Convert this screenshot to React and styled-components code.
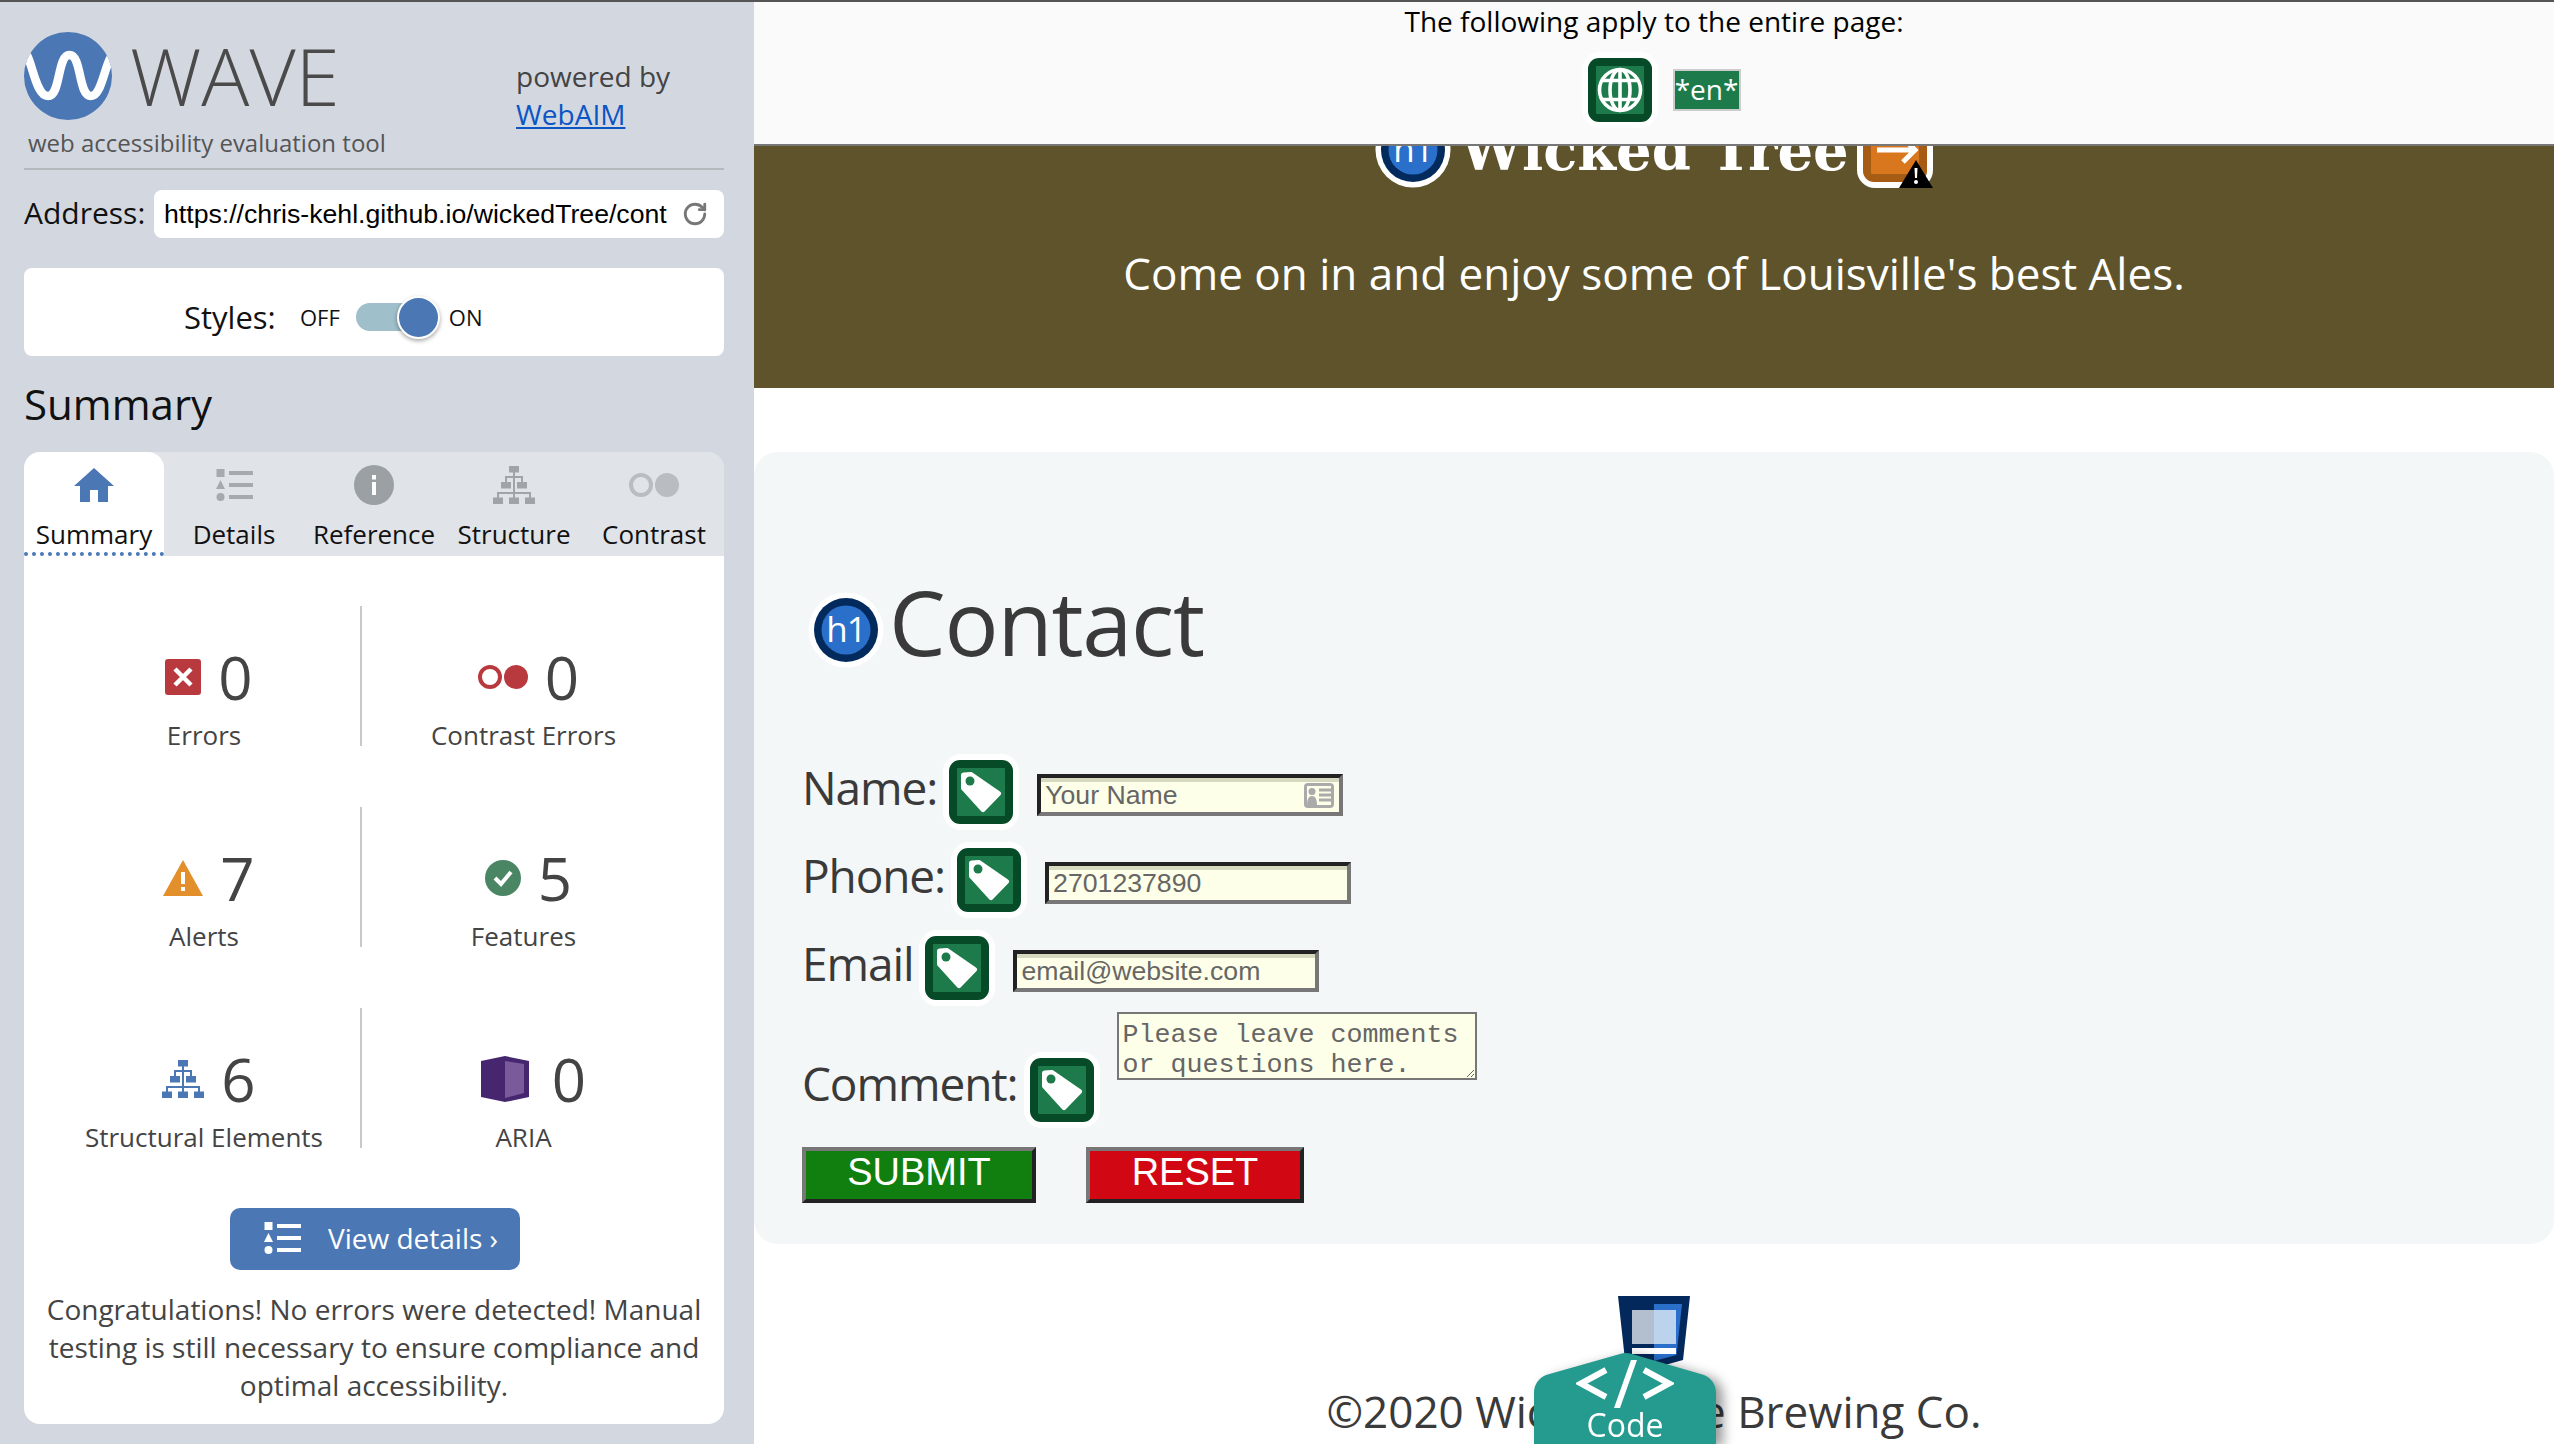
import React from 'react';
import styled, { createGlobalStyle } from 'styled-components';
import { RotateCw } from 'lucide-react';

const Global = createGlobalStyle`
  html, body { margin: 0; padding: 0; height: 1444px; overflow: hidden; background: #fff; }
  body { font-family: "Open Sans", "Liberation Sans", sans-serif; }
  * { box-sizing: border-box; }
`;

const Page = styled.div`
  width: 2554px; height: 1444px; display: flex; overflow: hidden;
  border-top: 2px solid #555; position: relative;
`;

/* ---------- sidebar ---------- */
const Sidebar = styled.aside`
  width: 754px; flex: none; background: #d3d8e0; padding: 30px 30px 0 24px; height: 1442px;
`;
const Brand = styled.header`
  display: flex; height: 138px; border-bottom: 2px solid #b4b9bd;
`;
const BrandLeft = styled.div` width: 492px; flex: none; `;
const LogoRow = styled.div` display: flex; align-items: center; gap: 18px; height: 88px; `;
const LogoWord = styled.div`
  font-size: 80px; font-weight: 300; color: #4a4a4a; line-height: 88px; margin-top: -2px;
`;
const Tagline = styled.div`
  font-size: 24px; color: #555; line-height: 30px; margin: 8px 0 0 4px;
`;
const Powered = styled.div`
  font-size: 28px; line-height: 38px; color: #444; padding-top: 25px;
  a { color: #0b55c5; display: block; }
`;
const AddressRow = styled.div` display: flex; align-items: center; margin-top: 20px; gap: 9px; `;
const AddressLabel = styled.label` font-size: 30px; color: #111; width: 121px; white-space: nowrap; margin-top: -4px; `;
const AddressBox = styled.div`
  flex: 1; height: 48px; background: #fff; border-radius: 8px; display: flex; align-items: center;
  padding: 0 10px 0 10px; color: #777; gap: 15px;
`;
const AddressText = styled.div`
  width: 503px; overflow: hidden; white-space: nowrap; font: 26.67px "Liberation Sans", sans-serif; color: #000;
`;
const StylesCard = styled.div`
  margin-top: 30px; height: 88px; background: #fff; border-radius: 8px; display: flex; align-items: center;
  padding: 10px 0 0 160px;
`;
const StylesLabel = styled.span` font-size: 31px; color: #111; width: 116px; `;
const ToggleText = styled.span` font-size: 22px; color: #111; `;
const Track = styled.div`
  width: 64px; height: 28px; background: #9fbfca; border-radius: 14px; margin: 0 29px 0 16px; position: relative; flex: none;
`;
const Knob = styled.div`
  position: absolute; left: 41px; top: -7px; width: 43px; height: 43px; border-radius: 50%; background: #4b78b5;
  border: 2px solid #fff; box-shadow: 0 2px 4px rgba(0,0,0,.35);
`;
const SummaryTitle = styled.h2`
  font-size: 42px; font-weight: 400; color: #111; margin: 21px 0 0; line-height: 54px; padding-bottom: 2px;
`;
const TabsPanel = styled.section` margin-top: 19px; `;
const TabBar = styled.div`
  display: flex; height: 104px; background: #e0e3e8; border-radius: 16px 16px 0 0;
`;
const Tab = styled.div`
  width: 140px; display: flex; flex-direction: column; align-items: center; position: relative;
  background: ${p => (p.$active ? '#fff' : 'transparent')};
  border-radius: ${p => (p.$active ? '16px 16px 0 0' : '0')};
  border-bottom: ${p => (p.$active ? '4px dotted #4b78b5' : '4px solid transparent')};
`;
const TabIcon = styled.div` height: 65px; display: flex; align-items: center; justify-content: center; `;
const TabLabel = styled.div` font-size: 26px; line-height: 34px; color: #111; white-space: nowrap; `;
const Body = styled.div`
  background: #fff; height: 868px; border-radius: 0 0 16px 16px; padding-top: 50px;
`;
const StatGrid = styled.div`
  display: grid; grid-template-columns: 314px 323px; padding-left: 24px; row-gap: 61px;
`;
const Stat = styled.div`
  height: 140px; padding-top: 37px; text-align: center;
  border-right: ${p => (p.$left ? '2px solid #c9c9c9' : 'none')};
`;
const StatValue = styled.div`
  display: flex; justify-content: center; align-items: center; gap: 17px; height: 68px; padding-left: ${p => p.$pl || 10}px;
`;
const StatNumber = styled.span`
  font-size: 60px; font-weight: 400; color: #444; line-height: 68px; margin-left: ${p => p.$ml || 0}px;
`;
const StatLabel = styled.div` font-size: 26px; color: #444; line-height: 36px; margin-top: 6px; white-space: nowrap; `;
const DetailsBtn = styled.div`
  width: 290px; height: 62px; margin: 60px auto 0 206px; background: #4b78b5; border-radius: 10px; color: #fff;
  display: flex; align-items: center; padding: 0 0 2px 34px; gap: 27px; font-size: 28px;
`;
const Congrats = styled.p`
  margin: 20px 0 0; text-align: center; color: #444; font-size: 28px; line-height: 38px; padding: 0 10px;
`;

/* ---------- main ---------- */
const Main = styled.main` flex: 1; display: flex; flex-direction: column; min-width: 0; overflow: hidden; `;
const PageBar = styled.div`
  height: 144px; background: #fafafa; border-bottom: 2px solid #777; flex: none; text-align: center;
`;
const PageBarTitle = styled.div` font-size: 28px; line-height: 38px; color: #000; `;
const PageBarIcons = styled.div`
  display: flex; justify-content: center; align-items: center; gap: 15px; margin-top: 12px; padding-left: 14px;
`;
const LangTag = styled.span`
  width: 68px; height: 42px; background: #1d7a4a; border: 2px solid #ccc; color: #fff; font-size: 28px; line-height: 36px;
  text-align: center; white-space: nowrap; overflow: hidden;
`;
const Hero = styled.div`
  height: 242px; flex: none; background: #5e532b; overflow: hidden; color: #fff; text-align: center;
`;
const HeroTitle = styled.div`
  display: flex; justify-content: center; align-items: flex-start; gap: 9px; margin-top: -34px; height: 76px;
`;
const HeroName = styled.h1`
  margin: 0; font: 700 56px/76px "DejaVu Serif", serif; letter-spacing: 0; color: #fff; white-space: nowrap; width: 388px; text-align: left;
`;
const HeroTag = styled.p` margin: 55px 0 0; font-size: 44px; line-height: 60px; `;
const Card = styled.section`
  margin-top: 64px; height: 792px; flex: none; background: #f4f7f8; border-radius: 24px; padding: 0 0 0 48px;
`;
const ContactHead = styled.div` display: flex; align-items: center; padding: 140px 0 0 6px; height: 215px; `;
const ContactTitle = styled.h2`
  margin: 0 0 0 5px; font-size: 90px; font-weight: 400; letter-spacing: -1.2px; color: #3a3a3a; line-height: 75px;
  transform: translateY(-8px);
`;
const Row = styled.div` display: flex; align-items: flex-start; margin-top: ${p => p.$mt}px; `;
const FieldLabel = styled.label`
  font-size: 46px; letter-spacing: -1.1px; line-height: 66px; color: #3a3a3a; margin-top: ${p => p.$mt || 0}px; white-space: nowrap;
`;
const BadgeSlot = styled.span`
  display: block; flex: none; margin: ${p => p.$mt || 0}px 0 0 6px; width: 76px; height: 76px;
`;
const InputWrap = styled.div` position: relative; margin: 20px 0 0 18px; flex: none; `;
const Field = styled.input`
  width: 306px; height: 42px; display: block; background: #feffe8; border: 4px solid; border-color: #222 #777 #777 #222;
  box-shadow: inset 0 4px 0 #d6d8c0; padding: 1px 4px 0; font: 26.67px "Liberation Sans", sans-serif; color: #666; outline: none;
  &::placeholder { color: #666; opacity: 1; }
`;
const CardIcon = styled.svg` position: absolute; right: 8px; top: 8px; `;
const CommentBox = styled.textarea`
  width: 360px; height: 68px; margin-left: 17px; background: #feffe8; border: 2px solid #777; padding: 6px 4px 0;
  font: 26.67px/30px "Liberation Mono", monospace; color: #666; resize: both; overflow: hidden; outline: none; flex: none;
`;
const Buttons = styled.div` display: flex; gap: 50px; margin-top: 19px; `;
const FormBtn = styled.button`
  width: ${p => p.$w}px; height: 56px; background: ${p => p.$bg}; color: #fff; border: 4px solid; border-color: #777 #222 #222 #777;
  font: 38px "Liberation Sans", sans-serif; padding: 0 0 5px; text-transform: uppercase;
`;
const Footer = styled.footer` display: flex; flex-direction: column; align-items: center; margin-top: 52px; `;
const FooterText = styled.div` font-size: 44px; line-height: 60px; color: #3a3a3a; margin-top: 13px; white-space: nowrap; `;
const CodeTabWrap = styled.div`
  position: absolute; left: 1534px; bottom: 0; width: 182px; height: 91px; filter: drop-shadow(7px 3px 6px rgba(0,0,0,.4));
`;
const CodeTab = styled.div`
  width: 182px; height: 91px; background: #259a8f; color: #fff; text-align: center; padding-top: 7px;
  clip-path: path('M0 91 V40 C0 31 5 25 12 22 L86 1 Q92 -1 98 1 L170 22 C177 25 182 31 182 40 V91 Z');
  display: flex; flex-direction: column; align-items: center;
`;
const CodeLabel = styled.div` font-size: 32px; line-height: 36px; margin-top: -1px; `;

/* ---------- icons ---------- */
const Badge = ({ dark, light, round, children }) => (
  <svg width="76" height="76" viewBox="0 0 76 76" style={{ display: 'block', flex: 'none' }}>
    {round ? (
      <>
        <circle cx="38" cy="38" r="37.5" fill="#fff" />
        <circle cx="38" cy="38" r="32" fill={dark} />
        <circle cx="38" cy="38" r="24.5" fill={light} />
      </>
    ) : (
      <>
        <rect x="0" y="0" width="76" height="76" rx="18" fill="#fff" />
        <rect x="6" y="6" width="64" height="64" rx="11" fill={dark} />
        <rect x="14" y="14" width="48" height="48" rx="1" fill={light} />
      </>
    )}
    {children}
  </svg>
);
const H1Badge = () => (
  <Badge round dark="#032a5c" light="#2a6fca">
    <text x="38" y="50" textAnchor="middle" fontSize="35" letterSpacing="-1" fill="#fff" fontFamily="Open Sans">h1</text>
  </Badge>
);
const TagBadge = () => (
  <Badge dark="#064a28" light="#1d7a4a">
    <path d="M20.5 21 L28 20.5 L55.5 39.5 L40 55.5 L20.5 34 Z" fill="#fff" stroke="#fff" strokeWidth="5" strokeLinejoin="round" />
    <circle cx="27" cy="27" r="4.5" fill="#1d7a4a" />
  </Badge>
);
const GlobeBadge = () => (
  <Badge dark="#064a28" light="#1d7a4a">
    <g fill="none" stroke="#fff" strokeWidth="3.6">
      <circle cx="38" cy="38" r="20.5" />
      <ellipse cx="38" cy="38" rx="10" ry="20.5" />
      <path d="M38 17.5 V58.5 M20 28.5 H56 M20 47.5 H56" />
    </g>
  </Badge>
);
const LinkBadge = () => (
  <Badge dark="#a65c14" light="#d9771f">
    <path d="M20 38 H58 M46 26 L58 38 L46 50" fill="none" stroke="#fff" strokeWidth="5" />
    <path d="M59 48 L76 76 H42 Z" fill="#000" />
    <path d="M57.5 56 H60.5 L60 66 H58 Z" fill="#fff" />
    <circle cx="59" cy="70" r="2" fill="#fff" />
  </Badge>
);
const WaveLogo = () => (
  <svg width="88" height="88" viewBox="0 0 88 88">
    <defs><clipPath id="logoclip"><circle cx="44" cy="44" r="44" /></clipPath></defs>
    <circle cx="44" cy="44" r="44" fill="#4b78b5" />
    <path clipPath="url(#logoclip)" d="M-2 18 C8 20 10 64 24 64 C37 64 33 23 45.5 23 C58 23 54 64 67 64 C79 64 80 28 92 18"
      fill="none" stroke="#fff" strokeWidth="8.5" />
  </svg>
);
const HomeIcon = () => (
  <svg width="40" height="34" viewBox="0 0 40 34"><path d="M20 0 L40 18 H34 V34 H24 V22 H16 V34 H6 V18 H0 Z" fill="#4b78b5" /></svg>
);
const ListIcon = ({ color }) => (
  <svg width="37" height="32" viewBox="0 0 37 32" fill={color} style={{ display: 'block' }}>
    <rect x="0.5" y="0" width="8" height="8" /><rect x="13" y="2" width="24" height="4" />
    <path d="M4.5 11 L9 20 H0 Z" /><rect x="13" y="14" width="24" height="4" />
    <ellipse cx="4.5" cy="28" rx="4" ry="4" /><rect x="13" y="26" width="24" height="4" />
  </svg>
);
const InfoIcon = () => (
  <svg width="40" height="40" viewBox="0 0 40 40"><circle cx="20" cy="20" r="20" fill="#9aa0a3" />
    <rect x="18" y="10" width="4" height="4.5" fill="#fff" /><rect x="18" y="17" width="4" height="13" fill="#fff" /></svg>
);
const TreeIcon = ({ color }) => (
  <svg width="42" height="38" viewBox="0 0 42 38" style={{ display: 'block' }}>
    <g fill={color}>
      <rect x="16" y="0" width="10" height="6.5" /><rect x="8" y="16" width="10" height="6.5" /><rect x="24" y="16" width="10" height="6.5" />
      <rect x="0" y="31.5" width="10" height="6.5" /><rect x="16" y="31.5" width="10" height="6.5" /><rect x="32" y="31.5" width="10" height="6.5" />
    </g>
    <path d="M21 6 V32 M13 16 V11 H29 V16 M5 32 V27 H37 V32" fill="none" stroke={color} strokeWidth="2" />
  </svg>
);
const ContrastIcon = ({ stroke, fill }) => (
  <svg width="50" height="24" viewBox="0 0 50 24" style={{ display: 'block' }}>
    <circle cx="12" cy="12" r="10" fill="none" stroke={stroke} strokeWidth="4" /><circle cx="38" cy="12" r="12" fill={fill} />
  </svg>
);
const ErrorIcon = () => (
  <svg width="36" height="36" viewBox="0 0 36 36"><rect width="36" height="36" rx="3" fill="#b83a3e" />
    <path d="M10 10 L26 26 M26 10 L10 26" stroke="#fff" strokeWidth="4.5" /></svg>
);
const AlertIcon = () => (
  <svg width="40" height="36" viewBox="0 0 40 36"><path d="M20 0 L40 36 H0 Z" fill="#e28f2c" />
    <rect x="18" y="12" width="4" height="12" fill="#fff" /><rect x="18" y="27" width="4" height="4" fill="#fff" /></svg>
);
const CheckIcon = () => (
  <svg width="36" height="36" viewBox="0 0 36 36"><circle cx="18" cy="18" r="18" fill="#4a8664" />
    <path d="M10 18 L16 24 L26 12" fill="none" stroke="#fff" strokeWidth="4" /></svg>
);
const AriaIcon = () => (
  <svg width="48" height="46" viewBox="0 0 48 46"><path d="M0 5 L24 0 L48 5 V41 L24 46 L0 41 Z" fill="#46266e" />
    <path d="M24 5 L43 8 V37 L24 42 Z" fill="#7b5a9c" /></svg>
);
const ShieldLogo = () => (
  <svg width="72" height="72" viewBox="0 0 72 72" style={{ display: 'block' }}>
    <path d="M0 0 H72 L65 64 L36 72 L7 64 Z" fill="#03295c" />
    <path d="M36 8 H64 L58.5 59 L36 65 Z" fill="#2a6fca" />
    <rect x="14" y="14" width="22" height="34" fill="#b3bfcf" /><rect x="36" y="14" width="22" height="34" fill="#bcd3ee" />
    <rect x="14" y="52" width="44" height="6" fill="#fff" />
  </svg>
);
const CodeGlyph = () => (
  <svg width="98" height="48" viewBox="0 0 98 48" style={{ display: 'block', flex: 'none' }}>
    <path d="M30 10 L5 23.5 L30 37 M68 10 L93 23.5 L68 37" fill="none" stroke="#fff" strokeWidth="6" />
    <path d="M55 0 L61 0 L44 48 L38 48 Z" fill="#fff" />
  </svg>
);

const tabs = [
  ['Summary', <HomeIcon />, true],
  ['Details', <ListIcon color="#a6aaae" />],
  ['Reference', <InfoIcon />],
  ['Structure', <TreeIcon color="#a0a4a8" />],
  ['Contrast', <ContrastIcon stroke="#b9bcc1" fill="#b9bcc1" />],
];
const stats = [
  [<ErrorIcon />, '0', 'Errors', true],
  [<ContrastIcon stroke="#b83a3e" fill="#b83a3e" />, '0', 'Contrast Errors'],
  [<AlertIcon />, '7', 'Alerts', true],
  [<CheckIcon />, '5', 'Features'],
  [<TreeIcon color="#4b78b5" />, '6', 'Structural Elements', true],
  [<AriaIcon />, '0', 'ARIA', false, 6, 20],
];

export default function App() {
  return (
    <Page>
      <Global />
      <Sidebar>
        <Brand>
          <BrandLeft>
            <LogoRow><WaveLogo /><LogoWord>WAVE</LogoWord></LogoRow>
            <Tagline>web accessibility evaluation tool</Tagline>
          </BrandLeft>
          <Powered>powered by<a href="#webaim">WebAIM</a></Powered>
        </Brand>
        <AddressRow>
          <AddressLabel>Address:</AddressLabel>
          <AddressBox>
            <AddressText>https://chris-kehl.github.io/wickedTree/contact.html</AddressText>
            <RotateCw size={26} strokeWidth={2.6} />
          </AddressBox>
        </AddressRow>
        <StylesCard>
          <StylesLabel>Styles:</StylesLabel>
          <ToggleText>OFF</ToggleText>
          <Track><Knob /></Track>
          <ToggleText>ON</ToggleText>
        </StylesCard>
        <SummaryTitle>Summary</SummaryTitle>
        <TabsPanel>
          <TabBar>
            {tabs.map(([label, icon, active]) => (
              <Tab key={label} $active={active}>
                <TabIcon>{icon}</TabIcon>
                <TabLabel>{label}</TabLabel>
              </Tab>
            ))}
          </TabBar>
          <Body>
            <StatGrid>
              {stats.map(([icon, n, label, left, ml, pl]) => (
                <Stat key={label} $left={left}>
                  <StatValue $pl={pl}>{icon}<StatNumber $ml={ml}>{n}</StatNumber></StatValue>
                  <StatLabel>{label}</StatLabel>
                </Stat>
              ))}
            </StatGrid>
            <DetailsBtn><ListIcon color="#fff" /><span>View details ›</span></DetailsBtn>
            <Congrats>Congratulations! No errors were detected! Manual testing is still necessary to ensure compliance and optimal accessibility.</Congrats>
          </Body>
        </TabsPanel>
      </Sidebar>
      <Main>
        <PageBar>
          <PageBarTitle>The following apply to the entire page:</PageBarTitle>
          <PageBarIcons><GlobeBadge /><LangTag>*en*</LangTag></PageBarIcons>
        </PageBar>
        <Hero>
          <HeroTitle>
            <H1Badge />
            <HeroName>Wicked Tree</HeroName>
            <LinkBadge />
          </HeroTitle>
          <HeroTag>Come on in and enjoy some of Louisville's best Ales.</HeroTag>
        </Hero>
        <Card>
          <ContactHead><H1Badge /><ContactTitle>Contact</ContactTitle></ContactHead>
          <Row $mt={87}>
            <FieldLabel>Name:</FieldLabel>
            <BadgeSlot><TagBadge /></BadgeSlot>
            <InputWrap>
              <Field placeholder="Your Name" readOnly />
              <CardIcon width="32" height="27" viewBox="0 0 32 27">
                <rect x="1" y="1" width="30" height="25" rx="4" fill="#aaa" />
                <rect x="4" y="4" width="24" height="19" fill="#feffe8" />
                <circle cx="9" cy="9.5" r="3.5" fill="#aaa" /><path d="M4 23 Q4 14 9 14 Q14 14 14 23 Z" fill="#aaa" />
                <path d="M16 8 H28 M16 13 H28 M16 18 H28" stroke="#aaa" strokeWidth="3" />
              </CardIcon>
            </InputWrap>
          </Row>
          <Row $mt={12}>
            <FieldLabel>Phone:</FieldLabel>
            <BadgeSlot><TagBadge /></BadgeSlot>
            <InputWrap><Field defaultValue="2701237890" readOnly /></InputWrap>
          </Row>
          <Row $mt={12}>
            <FieldLabel>Email</FieldLabel>
            <BadgeSlot><TagBadge /></BadgeSlot>
            <InputWrap><Field defaultValue="email@website.com" readOnly /></InputWrap>
          </Row>
          <Row $mt={6}>
            <FieldLabel $mt={38}>Comment:</FieldLabel>
            <BadgeSlot $mt={40}><TagBadge /></BadgeSlot>
            <CommentBox readOnly defaultValue="Please leave comments or questions here." />
          </Row>
          <Buttons>
            <FormBtn $w={234} $bg="#107f10">Submit</FormBtn>
            <FormBtn $w={218} $bg="#d10814">Reset</FormBtn>
          </Buttons>
        </Card>
        <Footer>
          <ShieldLogo />
          <FooterText>©2020 Wicked Tree Brewing Co.</FooterText>
        </Footer>
      </Main>
      <CodeTabWrap>
        <CodeTab><CodeGlyph /><CodeLabel>Code</CodeLabel></CodeTab>
      </CodeTabWrap>
    </Page>
  );
}
